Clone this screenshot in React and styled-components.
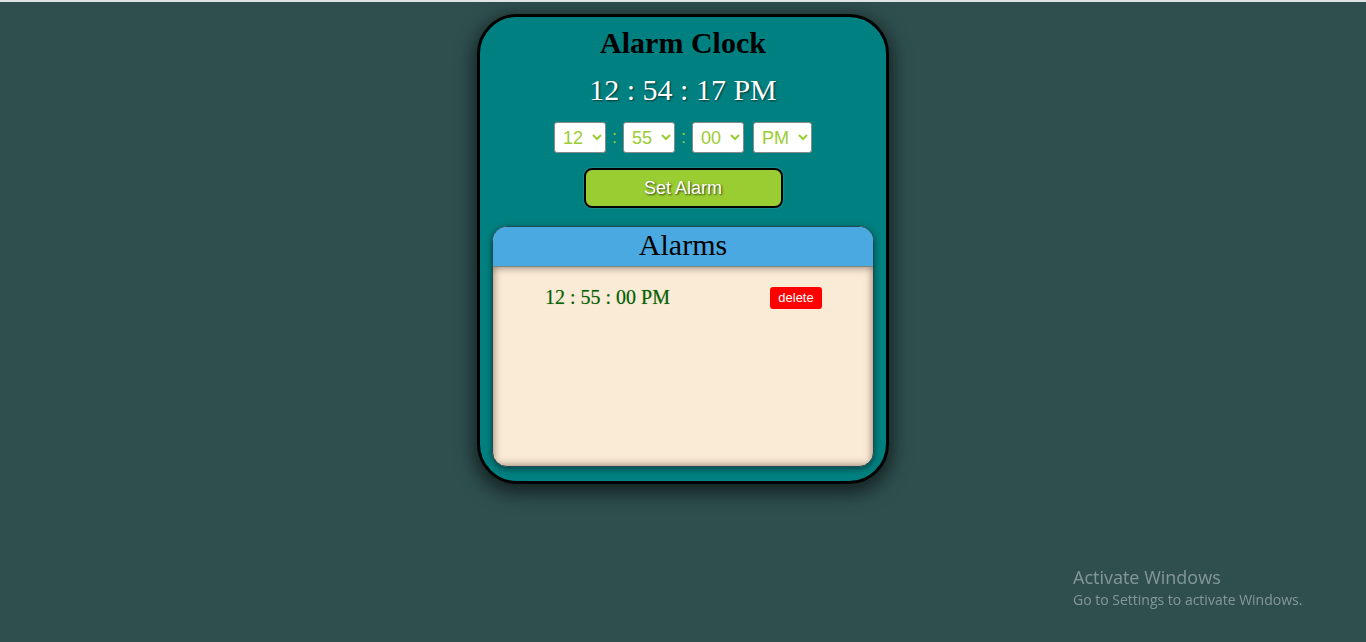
import React from "react";
import styled, { createGlobalStyle } from "styled-components";

const GlobalStyle = createGlobalStyle`
    html, body {
        margin: 0;
        padding: 0;
    }
    body {
        background-color: darkslategray;
        border-top: 2px solid #dfe3e6;
        min-height: 640px;
        font-family: "Liberation Serif", "Times New Roman", serif;
    }
`;

const Page = styled.div`
    display: flex;
    justify-content: center;
    padding-top: 12px;
`;

const Card = styled.div`
    width: 406px;
    height: 464px;
    box-sizing: content-box;
    background-color: teal;
    border: 3px solid black;
    border-radius: 40px;
    box-shadow: 0 6px 18px 4px rgba(0, 0, 0, 0.55);
    display: flex;
    flex-direction: column;
    align-items: center;
`;

const Title = styled.h1`
    margin: 9px 0 0;
    font-size: 30px;
    font-weight: bold;
    line-height: 34px;
    color: black;
`;

const Clock = styled.div`
    margin-top: 13px;
    font-size: 30px;
    line-height: 34px;
    color: white;
    text-shadow: 1px 1px 2px rgba(0, 0, 0, 0.6);
`;

const Pickers = styled.div`
    display: flex;
    align-items: center;
    margin-top: 15px;
    gap: 6px;
`;

const Picker = styled.select`
    width: ${({ wide }) => (wide ? "59px" : "52px")};
    height: 31px;
    margin-left: ${({ wide }) => (wide ? "3px" : "0")};
    font-family: "Liberation Sans", Arial, sans-serif;
    font-size: 18px;
    color: yellowgreen;
    background-color: white;
    border: 1px solid #8a8a8a;
    border-radius: 3px;
    padding: 0 2px 0 4px;
`;

const Sep = styled.span`
    font-family: "Liberation Sans", Arial, sans-serif;
    font-size: 18px;
    color: yellowgreen;
`;

const SetButton = styled.button`
    margin-top: 15px;
    width: 199px;
    height: 40px;
    background-color: yellowgreen;
    border: 2px solid black;
    border-radius: 8px;
    color: white;
    font-family: "Liberation Sans", Arial, sans-serif;
    font-size: 18px;
    text-shadow: 1px 1px 2px rgba(0, 0, 0, 0.7);
    box-shadow: 0 0 2px rgba(255, 255, 255, 0.3);
`;

const AlarmBox = styled.div`
    margin-top: 18px;
    width: 380px;
    height: 239px;
    border: 1px solid #1f4a55;
    border-radius: 15px;
    overflow: hidden;
    display: flex;
    flex-direction: column;
    background-color: antiquewhite;
    box-shadow: 0 2px 6px rgba(0, 0, 0, 0.5);
`;

const AlarmHead = styled.div`
    height: 39px;
    background-color: #4aa9e0;
    text-align: center;
    font-size: 30px;
    line-height: 36px;
    color: black;
    border-bottom: 1px solid #7a8a80;
`;

const AlarmList = styled.ul`
    flex: 1;
    margin: 0;
    padding: 19px 0 0 52px;
    list-style: none;
    box-shadow: inset 0 0 8px rgba(80, 60, 40, 0.7);
`;

const AlarmRow = styled.li`
    display: flex;
    align-items: center;
    justify-content: space-between;
    width: 277px;
`;

const AlarmTime = styled.span`
    font-size: 20px;
    color: darkgreen;
    text-shadow: 0 0 1px rgba(0, 0, 0, 0.3);
`;

const DeleteButton = styled.button`
    background-color: red;
    color: white;
    border: none;
    border-radius: 3px;
    width: 52px;
    height: 22px;
    padding: 0;
    font-family: "Liberation Sans", Arial, sans-serif;
    font-size: 13px;
`;

const Watermark = styled.div`
    position: fixed;
    left: 1073px;
    top: 565px;
    font-family: "Open Sans", "Noto Sans", sans-serif;
    color: rgba(200, 210, 210, 0.55);
    p {
        margin: 0;
    }
    .big {
        font-size: 18px;
        line-height: 24px;
    }
    .small {
        font-size: 14px;
        line-height: 22px;
    }
`;

function pad(n) {
    return String(n).padStart(2, "0");
}

export default function App() {
    const hours = Array.from({ length: 12 }, (_, i) => pad(i + 1));
    const minutes = Array.from({ length: 60 }, (_, i) => pad(i));

    return (
        <>
            <GlobalStyle />
            <Page>
                <Card>
                    <Title>Alarm Clock</Title>
                    <Clock>12 : 54 : 17 PM</Clock>
                    <Pickers>
                        <Picker defaultValue="12">
                            {hours.map((h) => (
                                <option key={h}>{h}</option>
                            ))}
                        </Picker>
                        <Sep>:</Sep>
                        <Picker defaultValue="55">
                            {minutes.map((m) => (
                                <option key={m}>{m}</option>
                            ))}
                        </Picker>
                        <Sep>:</Sep>
                        <Picker defaultValue="00">
                            {minutes.map((s) => (
                                <option key={s}>{s}</option>
                            ))}
                        </Picker>
                        <Picker wide defaultValue="PM">
                            <option>AM</option>
                            <option>PM</option>
                        </Picker>
                    </Pickers>
                    <SetButton>Set Alarm</SetButton>
                    <AlarmBox>
                        <AlarmHead>Alarms</AlarmHead>
                        <AlarmList>
                            <AlarmRow>
                                <AlarmTime>12 : 55 : 00 PM</AlarmTime>
                                <DeleteButton>delete</DeleteButton>
                            </AlarmRow>
                        </AlarmList>
                    </AlarmBox>
                </Card>
            </Page>
            <Watermark>
                <p className="big">Activate Windows</p>
                <p className="small">Go to Settings to activate Windows.</p>
            </Watermark>
        </>
    );
}
